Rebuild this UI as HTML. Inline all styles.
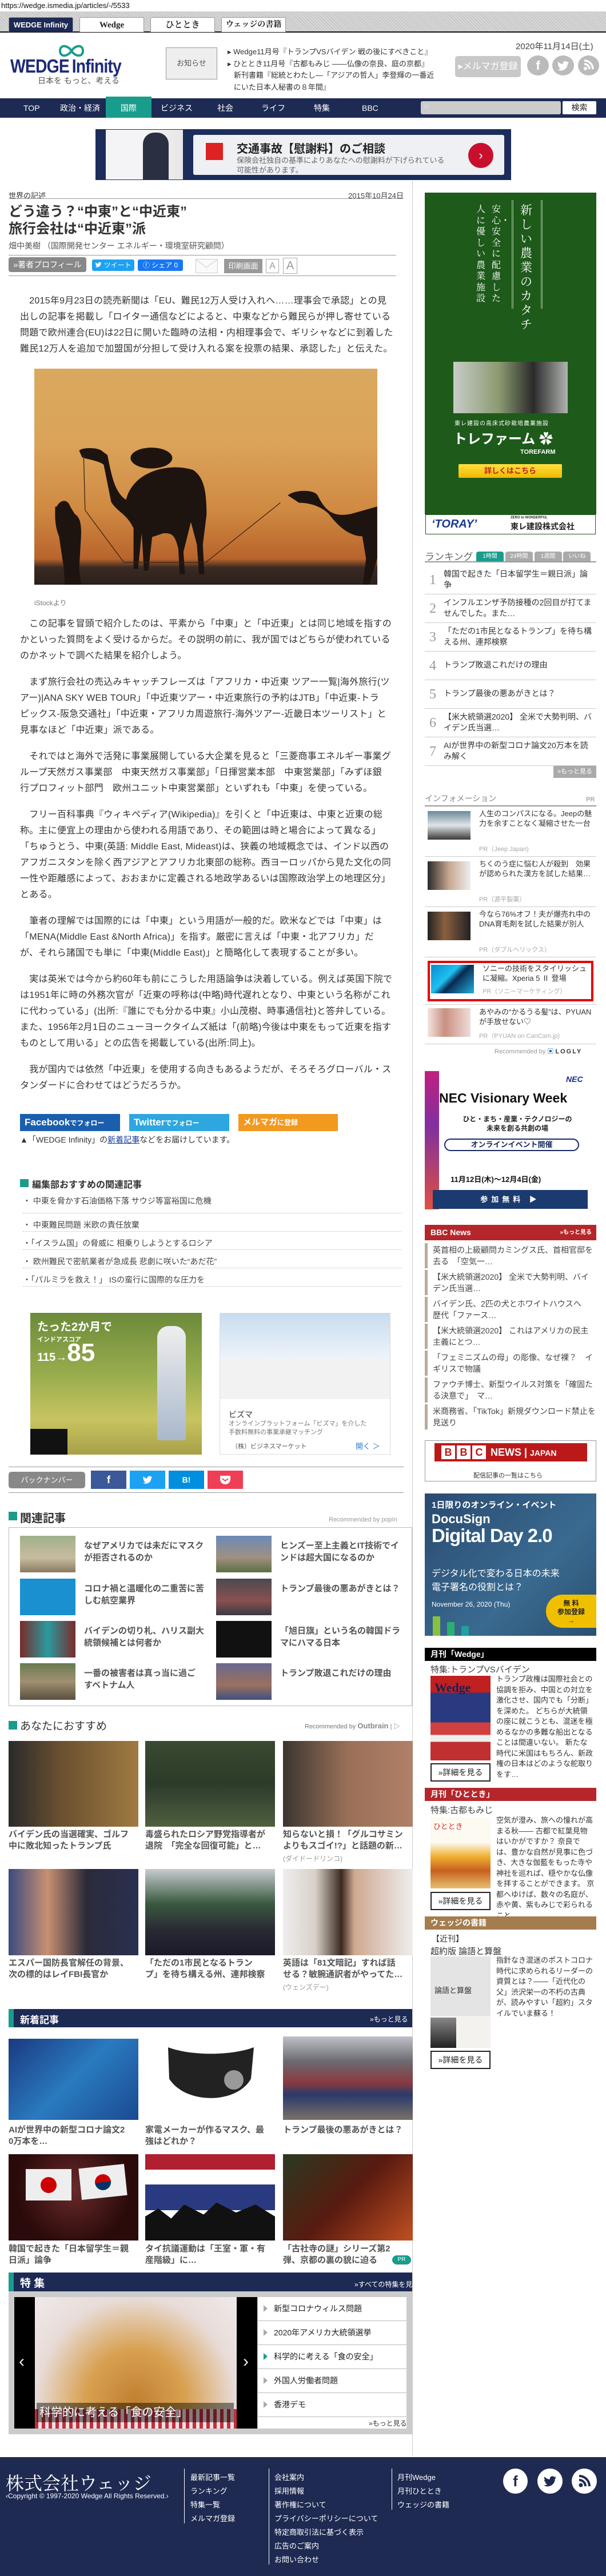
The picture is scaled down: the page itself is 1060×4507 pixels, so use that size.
<!DOCTYPE html>
<html lang="ja"><head><meta charset="utf-8">
<style>
*{margin:0;padding:0;box-sizing:border-box}
body{width:1060px;height:4507px;position:relative;background:#fff;font-family:"Liberation Sans","Noto Sans CJK JP",sans-serif;color:#333;overflow:hidden}
.a{position:absolute}
.nw{white-space:nowrap}
.tab{position:absolute;top:30px;height:26px;width:113px;background:#fff;border:1px solid #999;border-bottom:none;border-radius:3px 3px 0 0;font-size:15px;text-align:center;line-height:26px;color:#222;font-family:"Liberation Serif","Noto Serif CJK SC",serif;font-weight:bold}
.nav a{position:absolute;top:172px;height:34px;line-height:34px;color:#fff;font-size:14px}
.body p{white-space:nowrap;font-size:16px;line-height:28px;margin-bottom:18px;letter-spacing:.25px;color:#333}
.rel{font-size:14px;color:#444}
.th{position:absolute;width:97px;height:64px}
.rt{position:absolute;font-size:15px;font-weight:bold;color:#555;line-height:21px;width:210px}
.g3img{position:absolute;width:227px;height:150px}
.g3t{position:absolute;font-size:15px;font-weight:bold;color:#555;line-height:20px;width:227px;white-space:nowrap;overflow:hidden}
.src{position:absolute;font-size:12px;color:#999}
.rk{position:absolute;left:743px;width:300px;height:50px;border-bottom:1px solid #ccc}
.rk b{position:absolute;left:8px;top:12px;font-family:"Liberation Serif",serif;font-size:24px;color:#999;font-weight:normal}
.rk span{position:absolute;left:33px;top:5px;font-size:14px;line-height:19px;color:#333;width:262px}
.inf{position:absolute;left:743px;width:300px;border-bottom:1px solid #ccc}
.inf i{position:absolute;left:5px;top:8px;width:75px;height:50px}
.inf span{position:absolute;left:95px;top:4px;font-size:13px;line-height:17px;color:#333;width:200px;font-style:normal}
.inf em{position:absolute;left:95px;font-size:11px;color:#aaa;font-style:normal}
.bbc{position:absolute;left:743px;width:300px;height:44px;border-left:5px solid #b9ab9c;font-size:14px;line-height:20px;color:#444;padding-left:9px;padding-top:2px}
.side-t{position:absolute;left:743px;width:300px;height:23px;color:#fff;font-size:14px;font-weight:bold;padding-left:10px;line-height:23px}
.btn{position:absolute;left:753px;width:105px;height:32px;border:2px solid #222;font-size:14px;text-align:center;line-height:28px;color:#222}
.desc{position:absolute;left:868px;width:172px;font-size:13px;line-height:18.5px;color:#333}
.fl{position:absolute;font-size:13px;color:#fff}
.sl{position:absolute;left:451px;width:260px;font-size:14px;color:#222;border-bottom:1px solid #bbb;height:42px;line-height:40px;padding-left:28px}
.sl:before{content:"";position:absolute;left:10px;top:14px;border-left:7px solid #aaa;border-top:6px solid transparent;border-bottom:6px solid transparent}
.sl.on:before{border-left-color:#1a9c8c}
.bb{display:inline-block;width:24px;height:24px;background:#fff;color:#bb1919;text-align:center;line-height:24px;margin-right:3px;font-size:18px}
</style></head><body>
<svg width="0" height="0" style="position:absolute"><defs><symbol id="tw" viewBox="0 0 24 24"><path d="M23 5.5c-.8.4-1.7.6-2.6.7.9-.6 1.6-1.4 2-2.5-.9.5-1.9.9-2.9 1.1a4.5 4.5 0 0 0-7.7 4.1C8 8.7 4.7 6.9 2.5 4.2c-1.2 2-.6 4.6 1.4 6-.7 0-1.4-.2-2-.6 0 2.2 1.5 4.1 3.6 4.5-.7.2-1.4.2-2 .1.6 1.8 2.3 3.1 4.2 3.1A9 9 0 0 1 1 19.2 12.8 12.8 0 0 0 20.7 8.1c.9-.7 1.7-1.5 2.3-2.6z"/></symbol></defs></svg>

<div class="a nw" style="left:2px;top:2px;font-size:13px;color:#111">https://wedge.ismedia.jp/articles/-/5533</div>
<div class="a" style="left:0;top:20px;width:1060px;height:37px;background:repeating-linear-gradient(45deg,#d8d8d8 0 2px,#c8c8c8 2px 4px);border-bottom:2px solid #111"></div>
<div class="tab" style="left:15px;background:#1d2a54;color:#fff;font-family:'Liberation Sans',sans-serif;font-size:13px">WEDGE Infinity</div>
<div class="tab" style="left:139px">Wedge</div>
<div class="tab" style="left:263px">ひととき</div>
<div class="tab" style="left:387px;font-size:14px">ウェッジの書籍</div>

<svg class="a" style="left:100px;top:76px" width="50" height="26" viewBox="0 0 50 26"><path d="M25 13 C18 2 5 2 5 13 C5 24 18 24 25 13 C32 2 45 2 45 13 C45 24 32 24 25 13Z" fill="none" stroke="#1a9c8c" stroke-width="4"/></svg>
<div class="a nw" style="left:18px;top:97px;font-size:33px;color:#1d2a7a;letter-spacing:-1px;font-weight:bold;transform:scaleX(.86);transform-origin:left">WEDGE&thinsp;Infinity</div>
<div class="a nw" style="left:66px;top:131px;font-size:14px;color:#555">日本を もっと、考える</div>
<div class="a" style="left:290px;top:83px;width:90px;height:56px;background:#eee;border:1px solid #999;font-size:13px;color:#555;text-align:center;line-height:54px">お知らせ</div>
<div class="a nw" style="left:398px;top:81px;font-size:13px;line-height:20.5px;color:#333">
<div>▸ Wedge11月号『トランプVSバイデン 戦の後にすべきこと』</div>
<div>▸ ひととき11月号『古都もみじ ――仏像の奈良、庭の京都』</div>
<div>&nbsp;&nbsp;&nbsp;新刊書籍『総統とわたし―「アジアの哲人」李登輝の一番近</div>
<div>&nbsp;&nbsp;&nbsp;にいた日本人秘書の８年間』</div></div>
<div class="a nw" style="left:902px;top:70px;font-size:15px;color:#444">2020年11月14日(土)</div>
<div class="a" style="left:796px;top:98px;width:115px;height:37px;background:#c8c8c8;border-radius:5px;color:#fff;font-size:16px;text-align:center;line-height:37px">▸メルマガ登録</div>
<div class="a" style="left:922px;top:97px;width:38px;height:35px;border-radius:50%;background:#bbb;color:#fff;font-size:22px;font-weight:bold;text-align:center;line-height:35px">f</div>
<div class="a" style="left:966px;top:97px;width:38px;height:35px;border-radius:50%;background:#bbb"><svg width="38" height="35"><use href="#tw" x="8" y="7" width="22" height="22" fill="#fff"/></svg></div>
<div class="a" style="left:1011px;top:97px;width:37px;height:35px;border-radius:50%;background:#bbb"><svg width="37" height="35"><circle cx="13" cy="23" r="3" fill="#fff"/><path d="M11 15a9 9 0 0 1 9 9M11 9a15 15 0 0 1 15 15" stroke="#fff" stroke-width="3.5" fill="none"/></svg></div>

<div class="a" style="left:0;top:172px;width:1060px;height:34px;background:#1d2a54"></div>
<div class="a" style="left:185px;top:169px;width:80px;height:37px;background:#1a9c8c"></div>
<div class="nav">
<a style="left:41px">TOP</a><a style="left:105px">政治・経済</a><a style="left:211px">国際</a><a style="left:281px">ビジネス</a><a style="left:380px">社会</a><a style="left:457px">ライフ</a><a style="left:549px">特集</a><a style="left:633px">BBC</a></div>
<div class="a" style="left:736px;top:177px;width:245px;height:23px;background:#ccc;border-radius:3px"><span style="position:absolute;left:5px;top:1px;color:#eee;font-size:15px">○</span></div>
<div class="a" style="left:984px;top:177px;width:59px;height:23px;background:#fff;border-radius:2px;font-size:14px;text-align:center;line-height:23px;color:#222">検索</div>

<div class="a" style="left:167px;top:226px;width:727px;height:89px;background:#1c2d5b"></div>
<div class="a" style="left:185px;top:227px;width:135px;height:87px;background:linear-gradient(90deg,#f4f4f6 50%,#e8e6e6)"></div>
<div class="a" style="left:250px;top:232px;width:45px;height:82px;background:#2a2f42;border-radius:20px 20px 0 0"></div>
<div class="a" style="left:338px;top:236px;width:544px;height:70px;background:#eef0f4;border-radius:3px"></div>
<div class="a" style="left:360px;top:250px;width:30px;height:30px;background:#d22"></div>
<div class="a nw" style="left:414px;top:244px;font-size:20px;font-weight:bold;color:#222">交通事故【慰謝料】のご相談</div>
<div class="a nw" style="left:414px;top:272px;font-size:13px;color:#666;line-height:17px">保険会社独自の基準によりあなたへの慰謝料が下げられている<br>可能性があります。</div>
<div class="a" style="left:819px;top:250px;width:44px;height:44px;border-radius:50%;background:#c8102e;color:#fff;font-size:22px;text-align:center;line-height:44px">›</div>

<div class="a" style="left:721px;top:316px;width:1px;height:3980px;background:#ccc"></div>

<div class="a nw" style="left:15px;top:332px;font-size:13px;color:#333">世界の記述</div>
<div class="a nw" style="left:596px;top:332px;font-size:13px;color:#444;width:110px;text-align:right">2015年10月24日</div>
<div class="a" style="left:15px;top:347px;width:691px;height:1px;background:#999"></div>
<div class="a nw" style="left:15px;top:356px;font-size:24px;font-weight:bold;color:#333;line-height:30px">どう違う？“中東”と“中近東”<br>旅行会社は“中近東”派</div>
<div class="a nw" style="left:15px;top:420px;font-size:14px;color:#555">畑中美樹 （国際開発センター エネルギー・環境室研究顧問）</div>
<div class="a" style="left:15px;top:446px;width:678px;height:1px;background:#999"></div>
<div class="a" style="left:15px;top:450px;width:136px;height:26px;background:#888;border-radius:4px;color:#fff;font-size:14px;line-height:26px;text-align:center">»著者プロフィール</div>
<div class="a nw" style="left:161px;top:454px;width:74px;height:20px;background:#1da1f2;border-radius:3px;color:#fff;font-size:12px;line-height:20px;text-align:center"><svg width="12" height="12" style="vertical-align:-1px"><use href="#tw" width="12" height="12" fill="#fff"/></svg> ツイート</div>
<div class="a" style="left:241px;top:454px;width:79px;height:20px;background:#1877f2;border-radius:3px;color:#fff;font-size:12px;line-height:20px;text-align:center">ⓕ シェア 0</div>
<div class="a" style="left:342px;top:453px;width:39px;height:25px;border:1px solid #ccc;background:#fafafa"><svg width="37" height="23"><path d="M0 0L18 14L37 0" stroke="#ccc" fill="none"/></svg></div>
<div class="a" style="left:392px;top:453px;width:67px;height:25px;background:#999;color:#fff;font-size:13px;line-height:25px;text-align:center">印刷画面</div>
<div class="a" style="left:465px;top:453px;width:23px;height:25px;border:1px solid #aaa;color:#999;font-size:16px;text-align:center;line-height:23px">A</div>
<div class="a" style="left:495px;top:451px;width:25px;height:28px;border:1px solid #aaa;color:#999;font-size:20px;text-align:center;line-height:26px">A</div>
<div class="a" style="left:15px;top:482px;width:678px;height:1px;background:#999"></div>

<div class="a body" style="left:35px;top:513px">
<p>　2015年9月23日の読売新聞は「EU、難民12万人受け入れへ……理事会で承認」との見<br>出しの記事を掲載し「ロイター通信などによると、中東などから難民らが押し寄せている<br>問題で欧州連合(EU)は22日に開いた臨時の法相・内相理事会で、ギリシャなどに到着した<br>難民12万人を追加で加盟国が分担して受け入れる案を投票の結果、承認した」と伝えた。</p></div>

<div class="a" style="left:60px;top:645px;width:600px;height:378px;background:linear-gradient(180deg,#d9a95e 0%,#dba35a 35%,#d08a42 65%,#b8642c 88%,#3a2a22 92%,#2a201c 100%)"></div>
<svg class="a" style="left:60px;top:645px" width="600" height="378" viewBox="0 0 460 290">
<g fill="#1d1410">
<path d="M60 110c5-5 25-4 30 0l8 6c6 30 10 50 25 60 10-40 60-50 90-40 15 10 18 30 18 60l-5 40 2 40h-7l-3-40-8-30-10 40 2 30h-7l-2-35c-5-20-10-20-20-20l-15 5-5 45h-6l-3-50-5 48h-6l0-55c-10-20-20-20-30-35l-10-50c-5-5-25-8-29-10z"/>
<ellipse cx="157" cy="120" rx="28" ry="14"/>
<path d="M30 185c5-10 15-10 18 0l6 10c8 5 10 15 8 40l-2 35 3 20h-22l-2-25-6-40c-4-10-6-20-5-40z"/>
<path d="M340 170c10-8 35-8 40 0 10 20 20 30 45 25l35-10v70l-12 40h-8l5-40-5-30c-15 0-30-10-45-30-10-10-25-15-40-15z"/>
</g>
<path d="M66 115L68 190M68 190L120 260L230 260L330 180" stroke="#3a2418" fill="none"/>
</svg>
<div class="a nw" style="left:60px;top:1046px;font-size:12px;color:#777">iStockより</div>

<div class="a body" style="left:35px;top:1078px">
<p>　この記事を冒頭で紹介したのは、平素から「中東」と「中近東」とは同じ地域を指すの<br>かといった質問をよく受けるからだ。その説明の前に、我が国ではどちらが使われている<br>のかネットで調べた結果を紹介しよう。</p>
<p>　まず旅行会社の売込みキャッチフレーズは「アフリカ・中近東 ツアー一覧|海外旅行(ツ<br>アー)|ANA SKY WEB TOUR」「中近東ツアー・中近東旅行の予約はJTB」「中近東-トラ<br>ピックス-阪急交通社」「中近東・アフリカ周遊旅行-海外ツアー-近畿日本ツーリスト」と<br>見事なほど「中近東」派である。</p>
<p>　それではと海外で活発に事業展開している大企業を見ると「三菱商事エネルギー事業グ<br>ループ天然ガス事業部　中東天然ガス事業部」「日揮営業本部　中東営業部」「みずほ銀<br>行プロフィット部門　欧州ユニット中東営業部」といずれも「中東」を使っている。</p>
<p>　フリー百科事典『ウィキペディア(Wikipedia)』を引くと「中近東は、中東と近東の総<br>称。主に便宜上の理由から使われる用語であり、その範囲は時と場合によって異なる」<br>「ちゅうとう、中東(英語: Middle East, Mideast)は、狭義の地域概念では、インド以西の<br>アフガニスタンを除く西アジアとアフリカ北東部の総称。西ヨーロッパから見た文化の同<br>一性や距離感によって、おおまかに定義される地政学あるいは国際政治学上の地理区分」<br>とある。</p>
<p>　筆者の理解では国際的には「中東」という用語が一般的だ。欧米などでは「中東」は<br>「MENA(Middle East &amp;North Africa)」を指す。厳密に言えば「中東・北アフリカ」だ<br>が、それら諸国でも単に「中東(Middle East)」と簡略化して表現することが多い。</p>
<p>　実は英米では今から約60年も前にこうした用語論争は決着している。例えば英国下院で<br>は1951年に時の外務次官が「近東の呼称は(中略)時代遅れとなり、中東という名称がこれ<br>に代わっている」(出所:『誰にでも分かる中東』小山茂樹、時事通信社)と答弁している。<br>また、1956年2月1日のニューヨークタイムズ紙は「(前略)今後は中東をもって近東を指す<br>ものとして用いる」との広告を掲載している(出所:同上)。</p>
<p>　我が国内では依然「中近東」を使用する向きもあるようだが、そろそろグローバル・ス<br>タンダードに合わせてはどうだろうか。</p></div>

<div class="a nw" style="left:35px;top:1949px;width:175px;height:30px;background:#1a5fad;color:#fff;font-size:17px;font-weight:bold;line-height:30px;padding-left:8px">Facebook<span style="font-size:12px">でフォロー</span></div>
<div class="a nw" style="left:226px;top:1949px;width:175px;height:30px;background:#2ea7e0;color:#fff;font-size:17px;font-weight:bold;line-height:30px;padding-left:8px">Twitter<span style="font-size:12px">でフォロー</span></div>
<div class="a nw" style="left:417px;top:1949px;width:174px;height:30px;background:#f29a1f;color:#fff;font-size:15px;font-weight:bold;line-height:30px;padding-left:8px">メルマガ<span style="font-size:12px">に登録</span></div>
<div class="a nw" style="left:35px;top:1984px;font-size:14px;color:#333">▲「WEDGE Infinity」の<span style="color:#1a3ca0;text-decoration:underline">新着記事</span>などをお届けしています。</div>

<div class="a" style="left:35px;top:2063px;width:15px;height:14px;background:#1a9c8c"></div>
<div class="a nw" style="left:56px;top:2059px;font-size:16px;font-weight:bold;color:#333">編集部おすすめの関連記事</div>
<div class="a rel" style="left:40px;top:2091px;width:662px">
<div style="height:32px;border-bottom:1px dotted #bbb;line-height:20px">・ 中東を脅かす石油価格下落 サウジ等富裕国に危機</div>
<div style="height:32px;border-bottom:1px dotted #bbb;line-height:40px">・ 中東難民問題 米欧の責任放棄</div>
<div style="height:32px;border-bottom:1px dotted #bbb;line-height:40px">・「イスラム国」の脅威に 相乗りしようとするロシア</div>
<div style="height:32px;border-bottom:1px dotted #bbb;line-height:40px">・ 欧州難民で密航業者が急成長 悲劇に咲いた“あだ花”</div>
<div style="height:32px;border-bottom:1px dotted #bbb;line-height:40px">・「パルミラを救え！」 ISの蛮行に国際的な圧力を</div></div>

<div class="a" style="left:53px;top:2297px;width:300px;height:248px;background:linear-gradient(180deg,#6c8a3a 0%,#9aae4e 45%,#c8c460 75%,#a8a048 100%)"></div>
<div class="a nw" style="left:65px;top:2305px;font-size:20px;font-weight:bold;color:#fff">たった2か月で</div>
<div class="a nw" style="left:65px;top:2335px;font-size:11px;font-weight:bold;color:#fff">インドアスコア</div>
<div class="a nw" style="left:65px;top:2342px;font-size:20px;font-weight:bold;color:#fff">115→<span style="font-size:44px">85</span></div>
<div class="a" style="left:275px;top:2320px;width:50px;height:200px;background:linear-gradient(#eee,#aab8cc);border-radius:20px 20px 4px 4px"></div>
<div class="a" style="left:53px;top:2500px;width:65px;height:45px;background:#111"></div>
<div class="a" style="left:384px;top:2297px;width:299px;height:248px;border:1px solid #ddd;background:#fff"></div>
<div class="a" style="left:385px;top:2298px;width:297px;height:80px;background:linear-gradient(#c8dcf0,#eef4fa)"></div>
<div class="a" style="left:385px;top:2378px;width:297px;height:70px;background:#f2f2f2"></div>
<div class="a nw" style="left:400px;top:2465px;font-size:14px;color:#333">ビズマ</div>
<div class="a nw" style="left:400px;top:2484px;font-size:11px;color:#777;line-height:15px">オンラインプラットフォーム「ビズマ」を介した<br>手数料無料の事業承継マッチング</div>
<div class="a nw" style="left:405px;top:2522px;font-size:11px;color:#555">（株）ビジネスマーケット</div>
<div class="a nw" style="left:622px;top:2520px;font-size:13px;color:#2a7ad0">開く ＞</div>

<div class="a" style="left:15px;top:2566px;width:691px;height:1px;background:#999"></div>
<div class="a" style="left:15px;top:2575px;width:134px;height:29px;background:#888;border-radius:5px;color:#fff;font-size:13px;line-height:29px;text-align:center">バックナンバー</div>
<div class="a" style="left:159px;top:2573px;width:62px;height:32px;background:#3b5998;color:#fff;font-size:18px;font-weight:bold;text-align:center;line-height:32px">f</div>
<div class="a" style="left:227px;top:2573px;width:62px;height:32px;background:#1da1f2"><svg width="62" height="32"><use href="#tw" x="22" y="7" width="18" height="18" fill="#fff"/></svg></div>
<div class="a" style="left:295px;top:2573px;width:62px;height:32px;background:#008fde;color:#fff;font-size:14px;font-weight:bold;text-align:center;line-height:32px">B!</div>
<div class="a" style="left:363px;top:2573px;width:62px;height:32px;background:#ef3f56"><svg width="62" height="32"><path d="M22 9h18v6a9 9 0 0 1-18 0z" fill="#fff"/><path d="M26 14l5 4 5-4" stroke="#ef3f56" stroke-width="2" fill="none"/></svg></div>
<div class="a" style="left:15px;top:2611px;width:691px;height:1px;background:#999"></div>

<div class="a" style="left:15px;top:2645px;width:15px;height:15px;background:#1a9c8c"></div>
<div class="a nw" style="left:35px;top:2640px;font-size:20px;font-weight:bold;color:#333">関連記事</div>
<div class="a nw" style="left:575px;top:2653px;font-size:11px;color:#999">Recommended by popIn</div>
<div class="a" style="left:15px;top:2672px;width:706px;height:313px;border:1px solid #bbb"></div>
<div class="th" style="left:35px;top:2687px;background:linear-gradient(#9fb08a,#c8bca0 60%,#8a7a60)"></div>
<div class="rt" style="left:147px;top:2694px">なぜアメリカでは未だにマスクが拒否されるのか</div>
<div class="th" style="left:378px;top:2687px;background:linear-gradient(#6a8ab8,#a09080 60%,#5a7040)"></div>
<div class="rt" style="left:490px;top:2694px">ヒンズー至上主義とIT技術でインドは超大国になるのか</div>
<div class="th" style="left:35px;top:2762px;background:#1a90d0"></div>
<div class="rt" style="left:147px;top:2769px">コロナ禍と温暖化の二重苦に苦しむ航空業界</div>
<div class="th" style="left:378px;top:2762px;background:linear-gradient(#4a4a50,#8a5050 60%,#3a3a44)"></div>
<div class="rt" style="left:490px;top:2769px">トランプ最後の悪あがきとは？</div>
<div class="th" style="left:35px;top:2836px;background:linear-gradient(90deg,#7a2a2a,#2a9aa0 50%,#7a2a2a)"></div>
<div class="rt" style="left:147px;top:2843px">バイデンの切り札、ハリス副大統領候補とは何者か</div>
<div class="th" style="left:378px;top:2836px;background:#111"></div>
<div class="rt" style="left:490px;top:2843px">「旭日旗」という名の韓国ドラマにハマる日本</div>
<div class="th" style="left:35px;top:2910px;background:linear-gradient(#6a7a50,#a09070 50%,#5a5040)"></div>
<div class="rt" style="left:147px;top:2917px">一番の被害者は真っ当に過ごすベトナム人</div>
<div class="th" style="left:378px;top:2910px;background:linear-gradient(#6a6a90,#9a7060 60%,#405080)"></div>
<div class="rt" style="left:490px;top:2917px">トランプ敗退これだけの理由</div>

<div class="a" style="left:15px;top:3011px;width:15px;height:15px;background:#1a9c8c"></div>
<div class="a nw" style="left:35px;top:3005px;font-size:19px;color:#333">あなたにおすすめ</div>
<div class="a nw" style="left:533px;top:3012px;font-size:11px;color:#777">Recommended by <b style="font-size:13px;color:#888">Outbrain</b> | ▷</div>
<div class="g3img" style="left:15px;top:3046px;background:linear-gradient(90deg,#2a2a2a,#6a5030 40%,#a07a40)"></div>
<div class="g3img" style="left:254px;top:3046px;background:linear-gradient(#3a4a30,#2c3a2a 50%,#506040)"></div>
<div class="g3img" style="left:495px;top:3046px;background:linear-gradient(90deg,#3a3630,#9a7058 50%,#b08068)"></div>
<div class="g3t" style="left:15px;top:3200px">バイデン氏の当選確実、ゴルフ<br>中に敗北知ったトランプ氏</div>
<div class="g3t" style="left:254px;top:3200px">毒盛られたロシア野党指導者が<br>退院　「完全な回復可能」と…</div>
<div class="g3t" style="left:495px;top:3200px">知らないと損！「グルコサミン<br>よりもスゴイ!?」と話題の新…</div>
<div class="src" style="left:495px;top:3243px">(ダイドードリンコ)</div>
<div class="g3img" style="left:15px;top:3270px;height:151px;background:linear-gradient(90deg,#3a4a80,#c89070 30%,#2a2a3a 60%,#2a3050)"></div>
<div class="g3img" style="left:254px;top:3270px;height:151px;background:linear-gradient(#c8ccd0,#3a5a40 40%,#2a2a34 70%,#1a1a2a)"></div>
<div class="g3img" style="left:495px;top:3270px;height:151px;background:linear-gradient(90deg,#eee,#d8d0c8 25%,#3a2a20 45%,#d0a890 55%,#eee)"></div>
<div class="g3t" style="left:15px;top:3425px">エスパー国防長官解任の背景、<br>次の標的はレイFBI長官か</div>
<div class="g3t" style="left:254px;top:3425px">「ただの1市民となるトラン<br>プ」を待ち構える州、連邦検察</div>
<div class="g3t" style="left:495px;top:3425px">英語は「81文暗記」すれば話<br>せる？敏腕通訳者がやってた…</div>
<div class="src" style="left:495px;top:3468px">(ウェンズデー)</div>

<div class="a" style="left:15px;top:3515px;width:706px;height:32px;background:#1d2a54;border-left:9px solid #1a9c8c"></div>
<div class="a nw" style="left:35px;top:3520px;font-size:17px;font-weight:bold;color:#fff">新着記事</div>
<div class="a nw" style="left:647px;top:3524px;font-size:12px;color:#fff">»もっと見る</div>
<div class="g3img" style="left:15px;top:3567px;height:142px;background:linear-gradient(135deg,#1a3a80,#2a7ac0 50%,#1a4a90)"></div>
<div class="g3img" style="left:254px;top:3567px;height:142px;background:#fff"><svg width="227" height="142"><path d="M40 15C80 30 150 30 190 15L185 70C160 115 70 115 42 70Z" fill="#222"/><circle cx="155" cy="72" r="17" fill="#999"/></svg></div>
<div class="g3img" style="left:495px;top:3563px;height:146px;background:linear-gradient(#c0c0c8,#6a6a70 30%,#8a3a40 55%,#2a3a6a 70%,#7a7068)"></div>
<div class="g3t" style="left:15px;top:3717px">AIが世界中の新型コロナ論文2<br>0万本を…</div>
<div class="g3t" style="left:254px;top:3717px">家電メーカーが作るマスク、最<br>強はどれか？</div>
<div class="g3t" style="left:495px;top:3717px">トランプ最後の悪あがきとは？</div>
<div class="g3img" style="left:15px;top:3769px;height:151px;background:radial-gradient(circle at 50% 40%,#6a2a2a,#2a0a0a 70%)"></div>
<div class="a" style="left:45px;top:3795px;width:80px;height:55px;background:#eee"><div style="margin:14px auto;width:28px;height:28px;border-radius:50%;background:#c00"></div></div>
<div class="a" style="left:140px;top:3790px;width:80px;height:55px;background:#eee;transform:rotate(-6deg)"><div style="margin:14px auto;width:28px;height:28px;border-radius:50%;background:linear-gradient(#c00 50%,#036 50%)"></div></div>
<div class="g3img" style="left:254px;top:3769px;height:151px;background:linear-gradient(#b02030 0 18%,#fff 18% 35%,#2a3a80 35% 65%,#fff 65% 82%,#b02030 82%)"></div>
<div class="a" style="left:254px;top:3850px;width:227px;height:70px;background:#111;clip-path:polygon(0 40%,10% 20%,20% 45%,30% 10%,45% 35%,55% 5%,70% 30%,85% 10%,100% 40%,100% 100%,0 100%)"></div>
<div class="g3img" style="left:495px;top:3769px;height:151px;background:linear-gradient(135deg,#2a3a20,#5a1a10 50%,#c05020)"></div>
<div class="g3t" style="left:15px;top:3925px">韓国で起きた「日本留学生＝親<br>日派」論争</div>
<div class="g3t" style="left:254px;top:3925px">タイ抗議運動は「王室・軍・有<br>産階級」に…</div>
<div class="g3t" style="left:495px;top:3925px">「古社寺の謎」シリーズ第2<br>弾、京都の裏の貌に迫る</div>
<div class="a" style="left:686px;top:3946px;width:33px;height:16px;border-radius:8px;background:#1a9c8c;color:#fff;font-size:10px;text-align:center;line-height:16px">PR</div>

<div class="a" style="left:15px;top:3976px;width:706px;height:33px;background:#1d2a54;border-left:9px solid #1a9c8c"></div>
<div class="a nw" style="left:35px;top:3980px;font-size:19px;font-weight:bold;color:#fff">特 集</div>
<div class="a nw" style="left:620px;top:3988px;font-size:12px;color:#fff">»すべての特集を見る</div>
<div class="a" style="left:15px;top:4009px;width:706px;height:250px;background:#ccc"></div>
<div class="a" style="left:25px;top:4019px;width:425px;height:230px;background:#000"></div>
<div class="a" style="left:61px;top:4019px;width:353px;height:230px;background:radial-gradient(ellipse at 50% 80%,#c08030 0,#d8a050 35%,#e8dcd8 70%,#f0eaea)"></div>
<div class="a" style="left:61px;top:4215px;width:353px;height:34px;background:repeating-linear-gradient(90deg,#c03040 0 6px,#f0e0e0 6px 12px)"></div>
<div class="a nw" style="left:64px;top:4204px;width:345px;height:34px;background:rgba(0,0,0,.45);color:#fff;font-size:20px;line-height:34px;padding-left:5px">科学的に考える「食の安全」</div>
<div class="a" style="left:33px;top:4115px;color:#eee;font-size:30px">‹</div>
<div class="a" style="left:425px;top:4115px;color:#eee;font-size:30px">›</div>
<div class="a" style="left:451px;top:4019px;width:260px;height:230px;background:#fff"></div>
<div class="sl" style="top:4019px">新型コロナウィルス問題</div>
<div class="sl" style="top:4061px">2020年アメリカ大統領選挙</div>
<div class="sl on" style="top:4103px">科学的に考える「食の安全」</div>
<div class="sl" style="top:4145px">外国人労働者問題</div>
<div class="sl" style="top:4187px">香港デモ</div>
<div class="a nw" style="left:645px;top:4231px;font-size:12px;color:#333">»もっと見る</div>

<!-- sidebar -->
<div class="a" style="left:743px;top:337px;width:300px;height:563px;background:#1e5a1a"></div>
<div class="a" style="left:895px;top:350px;width:54px;height:190px;border-left:3px double #9ac090;border-right:3px double #9ac090"></div>
<div class="a" style="left:910px;top:355px;width:24px;font-size:21px;line-height:25px;color:#fff;font-family:'Noto Serif CJK SC',serif">新しい農業のカタチ</div>
<div class="a" style="left:860px;top:355px;width:20px;font-size:16px;line-height:19.5px;color:#fff;font-family:'Noto Serif CJK SC',serif">安心・安全に配慮した</div>
<div class="a" style="left:833px;top:355px;width:20px;font-size:16px;line-height:19.5px;color:#fff;font-family:'Noto Serif CJK SC',serif">人に優しい農業施設</div>
<div class="a" style="left:793px;top:633px;width:200px;height:90px;background:linear-gradient(90deg,#c8ccc8,#8a9a70 40%,#2a2a2a 70%,#b0b4b0)"></div>
<div class="a nw" style="left:795px;top:732px;font-size:10px;color:#fff;letter-spacing:1px">東レ建設の高床式砂栽培農業施設</div>
<div class="a nw" style="left:793px;top:748px;font-size:24px;font-weight:bold;color:#fff">トレファーム ✿</div>
<div class="a nw" style="left:910px;top:785px;font-size:11px;font-weight:bold;color:#fff">TOREFARM</div>
<div class="a" style="left:802px;top:812px;width:181px;height:24px;background:linear-gradient(#ffe040,#f0b800);border-radius:2px;color:#c02020;font-size:13px;font-weight:bold;text-align:center;line-height:24px">詳しくはこちら</div>
<div class="a" style="left:744px;top:900px;width:298px;height:35px;background:#fff;border:1px solid #1e5a1a"></div>
<div class="a nw" style="left:755px;top:906px;font-size:20px;font-weight:bold;color:#1a3a90;font-style:italic">‘TORAY’</div>
<div class="a nw" style="left:893px;top:903px;font-size:6px;color:#222;font-weight:bold">ZERO to WONDERFUL</div>
<div class="a nw" style="left:893px;top:911px;font-size:14px;color:#222;font-weight:bold">東レ建設株式会社</div>

<div class="a nw" style="left:743px;top:960px;font-size:17px;color:#666">ランキング</div>
<div class="a nw" style="left:833px;top:965px;font-size:10px;line-height:17px;color:#fff">
<span style="display:inline-block;width:48px;background:#1a9c8c;text-align:center;border-radius:4px 4px 0 0">1時間</span> <span style="display:inline-block;width:48px;background:#aaa;text-align:center;border-radius:4px 4px 0 0">24時間</span> <span style="display:inline-block;width:48px;background:#aaa;text-align:center;border-radius:4px 4px 0 0">1週間</span> <span style="display:inline-block;width:48px;background:#aaa;text-align:center;border-radius:4px 4px 0 0">いいね</span></div>
<div class="a" style="left:743px;top:982px;width:300px;height:2px;background:#999"></div>
<div class="rk" style="top:990px"><b>1</b><span>韓国で起きた「日本留学生＝親日派」論争</span></div>
<div class="rk" style="top:1040px"><b>2</b><span>インフルエンザ予防接種の2回目が打てませんでした。また…</span></div>
<div class="rk" style="top:1090px"><b>3</b><span>「ただの1市民となるトランプ」を待ち構える州、連邦検察</span></div>
<div class="rk" style="top:1140px"><b>4</b><span style="top:14px">トランプ敗退これだけの理由</span></div>
<div class="rk" style="top:1190px"><b>5</b><span style="top:14px">トランプ最後の悪あがきとは？</span></div>
<div class="rk" style="top:1240px"><b>6</b><span>【米大統領選2020】 全米で大勢判明、バイデン氏当選…</span></div>
<div class="rk" style="top:1290px"><b>7</b><span>AIが世界中の新型コロナ論文20万本を読み解く</span></div>
<div class="a" style="left:968px;top:1340px;width:75px;height:21px;background:#aaa;color:#fff;font-size:11px;text-align:center;line-height:21px">»もっと見る</div>

<div class="a nw" style="left:743px;top:1387px;font-size:14px;color:#888">インフォメーション</div>
<div class="a nw" style="left:1025px;top:1393px;font-size:11px;color:#aaa;font-weight:bold">PR</div>
<div class="a" style="left:743px;top:1409px;width:300px;height:2px;background:#999"></div>
<div class="inf" style="top:1411px;height:88px"><i style="background:linear-gradient(#6a8a9a,#e0e4e8 50%,#3a3a3a)"></i><span>人生のコンパスになる。Jeepの魅力を余すことなく凝縮させた一台</span><em style="top:66px">PR（Jeep Japan)</em></div>
<div class="inf" style="top:1499px;height:88px"><i style="background:linear-gradient(90deg,#2a2a2a,#c8a890 50%,#eee)"></i><span>ちくのう症に悩む人が殺到　効果が認められた漢方を試した結果…</span><em style="top:66px">PR（源平製薬）</em></div>
<div class="inf" style="top:1587px;height:88px"><i style="background:linear-gradient(90deg,#222,#8a6040 40%,#222)"></i><span>今なら76%オフ！夫が爆売れ中のDNA育毛剤を試した結果が別人</span><em style="top:66px">PR（ダブルヘリックス）</em></div>
<div class="inf" style="top:1675px;height:83px"></div>
<div class="a" style="left:748px;top:1681px;width:290px;height:71px;border:4px solid #e60000"></div>
<div class="a" style="left:754px;top:1688px;width:75px;height:50px;background:linear-gradient(135deg,#0a8ad0,#20c0f0 40%,#0a2a50 55%,#20b0e0)"></div>
<div class="a" style="left:844px;top:1686px;width:190px;font-size:13px;line-height:17px;color:#333">ソニーの技術をスタイリッシュに凝縮。Xperia 5 Ⅱ 登場</div>
<div class="a nw" style="left:844px;top:1726px;font-size:11px;color:#aaa">PR（ソニーマーケティング）</div>
<div class="inf" style="top:1758px;height:69px"><i style="top:6px;background:linear-gradient(90deg,#f4e4e0,#c89080 40%,#f0dcd8)"></i><span>あやみの“かるうる髪”は、PYUANが手放せない♡</span><em style="top:46px">PR（PYUAN on CanCam.jp)</em></div>
<div class="a nw" style="left:865px;top:1831px;font-size:11px;color:#999">Recommended by <b style="color:#1a6ab0">▣</b> <b style="color:#333;letter-spacing:2px">LOGLY</b></div>

<div class="a" style="left:743px;top:1874px;width:300px;height:242px;background:#fff"></div>
<div class="a" style="left:743px;top:1874px;width:25px;height:242px;background:linear-gradient(#c02080,#8030a0 40%,#e05040)"></div>
<div class="a nw" style="left:990px;top:1880px;font-size:14px;font-weight:bold;color:#1a2a90;font-style:italic">NEC</div>
<div class="a nw" style="left:768px;top:1908px;font-size:23px;font-weight:bold;color:#111">NEC Visionary Week</div>
<div class="a nw" style="left:775px;top:1950px;font-size:12px;font-weight:bold;color:#222;line-height:16px;text-align:center;width:260px">ひと・まち・産業・テクノロジーの<br>未来を創る共創の場</div>
<div class="a" style="left:777px;top:1992px;width:236px;height:22px;border:2px solid #1a2a60;border-radius:12px;font-size:13px;font-weight:bold;color:#1a2a60;text-align:center;line-height:18px">オンラインイベント開催</div>
<div class="a nw" style="left:788px;top:2053px;font-size:13px;font-weight:bold;color:#111">11月12日(木)〜12月4日(金)</div>
<div class="a" style="left:757px;top:2082px;width:271px;height:33px;background:#1a3a70;color:#fff;font-size:13px;font-weight:bold;text-align:center;line-height:33px;letter-spacing:6px">参加無料 ▶</div>

<div class="side-t" style="top:2143px;height:27px;line-height:27px;background:#b5262b">BBC News<span style="position:absolute;right:8px;font-size:10px">»もっと見る</span></div>
<div class="bbc" style="top:2175px">英首相の上級顧問カミングス氏、首相官邸を去る　「空気一…</div>
<div class="bbc" style="top:2222px">【米大統領選2020】 全米で大勢判明、バイデン氏当選…</div>
<div class="bbc" style="top:2269px">バイデン氏、2匹の犬とホワイトハウスへ　歴代「ファース…</div>
<div class="bbc" style="top:2316px">【米大統領選2020】 これはアメリカの民主主義にとつ…</div>
<div class="bbc" style="top:2363px">「フェミニズムの母」の彫像、なぜ裸？　イギリスで物議</div>
<div class="bbc" style="top:2410px">ファウチ博士、新型ウイルス対策を「確固たる決意で」　マ…</div>
<div class="bbc" style="top:2457px">米商務省、「TikTok」新規ダウンロード禁止を見送り</div>
<div class="a" style="left:743px;top:2520px;width:300px;height:72px;border:1px solid #999"></div>
<div class="a nw" style="left:760px;top:2525px;width:267px;height:32px;background:#bb1919;color:#fff;font-size:18px;font-weight:bold;line-height:32px;padding-left:12px;padding-top:4px;line-height:24px"><span class="bb">B</span><span class="bb">B</span><span class="bb">C</span> NEWS | <span style="font-size:14px">JAPAN</span></div>
<div class="a nw" style="left:828px;top:2573px;font-size:11px;color:#333">配信記事の一覧はこちら</div>

<div class="a" style="left:743px;top:2613px;width:300px;height:249px;background:linear-gradient(135deg,#2a4a70,#3a6a90 60%,#2a5070)"></div>
<div class="a nw" style="left:755px;top:2622px;font-size:15px;font-weight:bold;color:#fff">1日限りのオンライン・イベント</div>
<div class="a nw" style="left:755px;top:2645px;font-size:22px;font-weight:bold;color:#fff">DocuSign</div>
<div class="a nw" style="left:755px;top:2668px;font-size:33px;font-weight:bold;color:#fff;letter-spacing:-1px">Digital Day 2.0</div>
<div class="a nw" style="left:755px;top:2742px;font-size:16px;color:#fff;line-height:24px">デジタル化で変わる日本の未来<br>電子署名の役割とは？</div>
<div class="a nw" style="left:755px;top:2800px;font-size:12px;color:#fff">November 26, 2020 (Thu)</div>
<div class="a" style="left:955px;top:2790px;width:88px;height:58px;border-radius:40px 0 0 40px;background:#f0c000;color:#222;font-size:12px;font-weight:bold;text-align:center;line-height:15px;padding-top:8px">無 料<br>参加登録<br>→</div>
<div class="a" style="left:757px;top:2828px;width:13px;height:34px;background:#8ac040"></div>
<div class="a" style="left:782px;top:2838px;width:13px;height:24px;background:#2ab070"></div>
<div class="a" style="left:807px;top:2845px;width:13px;height:17px;background:#20a0a0"></div>

<div class="side-t" style="top:2883px;background:#000">月刊「Wedge」</div>
<div class="a nw" style="left:753px;top:2910px;font-size:15px;color:#444">特集:トランプVSバイデン</div>
<div class="a" style="left:753px;top:2932px;width:105px;height:148px;background:linear-gradient(#c02020 0 20%,#2a3a80 20% 55%,#d04040 55% 70%,#eee 70% 78%,#c03030 78%)"></div>
<div class="a nw" style="left:760px;top:2940px;font-size:22px;font-weight:bold;color:#1a2050;font-family:'Liberation Serif',serif">Wedge</div>
<div class="desc" style="top:2929px">トランプ政権は国際社会との協調を拒み、中国との対立を激化させ、国内でも「分断」を深めた。 どちらが大統領の座に就こうとも、混迷を極めるなかの多難な船出となることは間違いない。 新たな時代に米国はもちろん、新政権の日本はどのような舵取りをす…</div>
<div class="btn" style="top:3085px">»詳細を見る</div>

<div class="side-t" style="top:3128px;background:#b5262b">月刊「ひととき」</div>
<div class="a nw" style="left:753px;top:3156px;font-size:15px;color:#444">特集:古都もみじ</div>
<div class="a" style="left:753px;top:3180px;width:105px;height:124px;background:linear-gradient(#fdfaf2 0 35%,#f0b030 55%,#c86020 75%,#e8c070)"></div>
<div class="a nw" style="left:758px;top:3185px;font-size:13px;color:#d03030">ひととき</div>
<div class="desc" style="top:3176px">空気が澄み、旅への憧れが高まる秋—— 古都で紅葉見物はいかがですか？ 奈良では、豊かな自然が見事に色づき、大きな伽藍をもった寺や神社を巡れば、穏やかな仏像を拝することができます。 京都へゆけば、数々の名庭が、赤や黄、紫もみじで彩られること…</div>
<div class="btn" style="top:3310px">»詳細を見る</div>

<div class="side-t" style="top:3353px;background:#a57c4e">ウェッジの書籍</div>
<div class="a nw" style="left:755px;top:3382px;font-size:14px;color:#333">【近刊】</div>
<div class="a nw" style="left:753px;top:3403px;font-size:15px;color:#333">超約版 論語と算盤</div>
<div class="a" style="left:753px;top:3423px;width:105px;height:160px;background:linear-gradient(#e4e4e4 0 65%,#f4f2ee 65%)"></div>
<div class="a nw" style="left:760px;top:3472px;font-size:13px;color:#333">論語と算盤</div>
<div class="a" style="left:753px;top:3530px;width:45px;height:53px;background:linear-gradient(#888,#222)"></div>
<div class="desc" style="top:3421px">指針なき混迷のポストコロナ時代に求められるリーダーの資質とは？——「近代化の父」渋沢栄一の不朽の古典が、読みやすい「超約」スタイルでいま蘇る！</div>
<div class="btn" style="top:3588px">»詳細を見る</div>

<!-- footer -->
<div class="a" style="left:0;top:4299px;width:1060px;height:208px;background:#1e2a52"></div>
<div class="a nw" style="left:10px;top:4320px;font-size:32px;color:#fff;font-family:'Noto Serif CJK SC',serif">株式会社ウェッジ</div>
<div class="a nw" style="left:10px;top:4360px;font-size:12px;color:#fff">‹Copyright © 1997-2020 Wedge All Rights Reserved.›</div>
<div class="a" style="left:322px;top:4319px;width:1px;height:96px;background:#fff"></div>
<div class="a" style="left:470px;top:4319px;width:1px;height:168px;background:#fff"></div>
<div class="a" style="left:685px;top:4319px;width:1px;height:72px;background:#fff"></div>
<div class="fl" style="left:333px;top:4323px;line-height:24px">最新記事一覧<br>ランキング<br>特集一覧<br>メルマガ登録</div>
<div class="fl" style="left:480px;top:4323px;line-height:24px">会社案内<br>採用情報<br>著作権について<br>プライバシーポリシーについて<br>特定商取引法に基づく表示<br>広告のご案内<br>お問い合わせ</div>
<div class="fl" style="left:695px;top:4323px;line-height:24px">月刊Wedge<br>月刊ひととき<br>ウェッジの書籍</div>
<div class="a" style="left:880px;top:4319px;width:43px;height:44px;border-radius:50%;background:#fff;color:#1e2a52;font-size:26px;font-weight:bold;text-align:center;line-height:44px">f</div>
<div class="a" style="left:940px;top:4319px;width:44px;height:44px;border-radius:50%;background:#fff"><svg width="44" height="44"><use href="#tw" x="10" y="10" width="24" height="24" fill="#1e2a52"/></svg></div>
<div class="a" style="left:1000px;top:4319px;width:44px;height:44px;border-radius:50%;background:#fff"><svg width="44" height="44"><circle cx="16" cy="29" r="3.5" fill="#1e2a52"/><path d="M13 20a11 11 0 0 1 11 11M13 13a18 18 0 0 1 18 18" stroke="#1e2a52" stroke-width="4" fill="none"/></svg></div>
</body></html>
